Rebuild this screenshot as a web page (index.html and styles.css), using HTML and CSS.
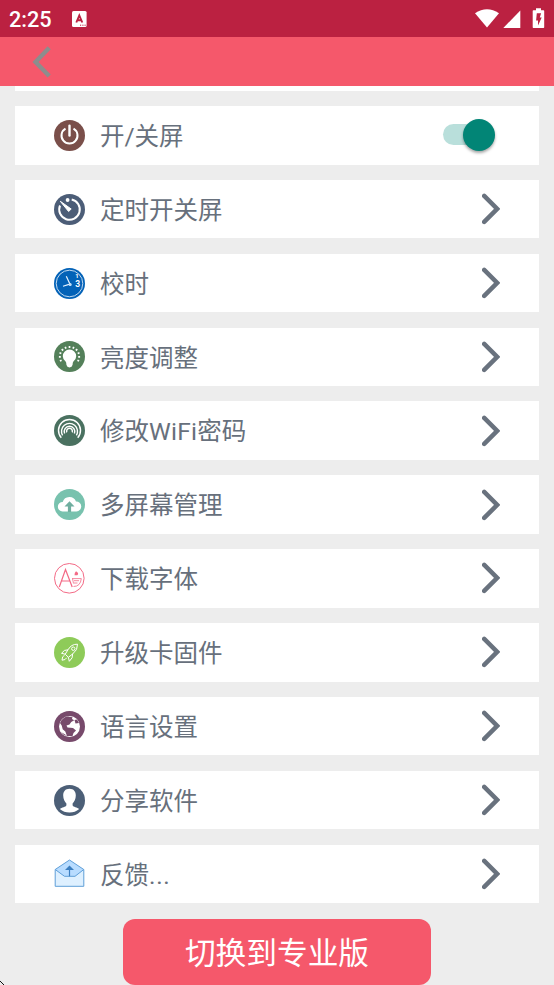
FILE: index.html
```html
<!DOCTYPE html>
<html lang="zh-CN">
<head>
<meta charset="utf-8">
<title>设置</title>
<link rel="stylesheet" href="styles.css">
</head>
<body>
<svg width="0" height="0" class="defs"><defs>
<symbol id="chevron" viewBox="0 0 18 32"><path d="M2.200 2.900L15.200 15.900L2.200 28.900" fill="none" stroke="#69727e" stroke-width="4.500" stroke-linecap="round" stroke-linejoin="miter"/></symbol>
</defs></svg>
<div class="screen">
<header class="status">
<span class="clock">2:25</span>
<svg class="note" viewBox="0 0 15 17"><rect x="0" y="0" width="14.600" height="16" rx="1.500" fill="#fff"/><path d="M4.300 11.500L7.300 4.500L10.300 11.500M5.500 9.200H9.100" fill="none" stroke="#bb2141" stroke-width="1.900"/><path d="M8 14.200h1.200M10.300 14.200h1.200M12.500 14.200h1.200" stroke="#bb2141" stroke-width="1"/></svg>
<svg class="signals" viewBox="0 0 70 22"><g fill="#fff"><path d="M0 5.300Q12 -2.700 24 5.300L12 19.500Z"/><path d="M45.300 2.500V20H28.300Z"/><path d="M61 .2h5v2h2.500q.7 0 .7.700V19.300q0 .7-.7.700H58.400q-.7 0-.7-.7V2.900q0-.7.700-.7H61Z"/></g><path d="M61.800 5.200h4.300l-1.300 4.200h1.900l-3.700 8.200v-5.200h-1.900Z" fill="#bb2141"/></svg>
</header>
<nav class="bar"><svg class="back" viewBox="0 0 20 32"><path d="M17.200 1.800L3.500 16L17.200 30" fill="none" stroke="#8d8d8d" stroke-width="4.400"/></svg></nav>
<main>
<div class="sliver"></div>
<div class="list">
<div class="row"><svg class="icon" viewBox="0 0 31 31"><circle cx="15.500" cy="15.500" r="15.500" fill="#7a4f4a"/><path d="M11.500 8.600A8 8 0 1 0 19.500 8.600" fill="none" stroke="#fff" stroke-width="2"/><path d="M15.500 5.800V15.500" stroke="#fff" stroke-width="2.400" stroke-linecap="round"/></svg><span class="label">开/关屏</span><span class="switch"><span class="knob"></span></span></div>
<div class="row"><svg class="icon" viewBox="0 0 31 31"><circle cx="15.500" cy="15.500" r="15.500" fill="#4c5d77"/><path d="M17.700 5.400A10.300 10.300 0 1 1 6 11.500" fill="none" stroke="#fff" stroke-width="2"/><circle cx="13.600" cy="6" r="1.900" fill="#fff"/><path d="M6.300 7.300L17.200 15L14.600 17.500Z" fill="#fff" stroke="#fff" stroke-width="1" stroke-linejoin="round"/></svg><span class="label">定时开关屏</span><svg class="go"><use href="#chevron"/></svg></div>
<div class="row"><svg class="icon" viewBox="0 0 31 31"><circle cx="15.500" cy="15.500" r="15.500" fill="#0362b7"/><circle cx="15.500" cy="15.500" r="13.300" fill="none" stroke="#d8e8f7" stroke-width=".9"/><path d="M12.300 8.200L16.600 17.500M9 18.200L16.600 15.900" stroke="#e9f4ff" stroke-width="1.200"/><circle cx="16.200" cy="16.500" r="1.500" fill="#c2def5"/><text x="21.200" y="10" class="digit-one">1</text><text x="21.200" y="19.200" class="digit-three">3</text></svg><span class="label">校时</span><svg class="go"><use href="#chevron"/></svg></div>
<div class="row"><svg class="icon" viewBox="0 0 31 31"><circle cx="15.500" cy="15.500" r="15.500" fill="#54805a"/><path d="M8.800 15.200a6.700 6.700 0 0 1 13.400 0q0 3-2.800 5.400-.8.900-.8 3.200-.5 2.600-3.100 2.600t-3.100-2.600q0-2.300-.8-3.200-2.800-2.400-2.800-5.400Z" fill="#fff"/><path d="M15.500 5V7M11.200 5.900L12 7.700M19.800 5.900L19 7.700M7.700 8.200L9.200 9.500M23.300 8.200L21.800 9.500M5.500 11.800L7.300 12.500M25.500 11.800L23.700 12.500M4.900 15.800H6.800M26.100 15.800H24.200M5.900 20L7.600 19.200M25.100 20L23.400 19.200" stroke="#fff" stroke-width="1.700"/></svg><span class="label">亮度调整</span><svg class="go"><use href="#chevron"/></svg></div>
<div class="row"><svg class="icon" viewBox="0 0 31 31"><circle cx="15.500" cy="15.500" r="15.500" fill="#4a7160"/><g fill="none" stroke="#fff" stroke-width="1.450"><path d="M7.300 22.800A11 11 0 1 1 23.700 22.800"/><path d="M8.600 20.400A8 8 0 1 1 22.400 20.400"/><path d="M10.600 18.500A5.300 5.300 0 1 1 20.400 18.500"/><path d="M12.900 17.500A2.900 2.900 0 1 1 18.100 17.500"/></g><path d="M15.500 15L21.500 21.500H9.500Z" fill="#4a7160"/></svg><span class="label">修改<span class="latin">WiFi</span>密码</span><svg class="go"><use href="#chevron"/></svg></div>
<div class="row"><svg class="icon" viewBox="0 0 31 31"><circle cx="15.500" cy="15.500" r="15.500" fill="#78c2ae"/><path d="M8.500 22.500A4.700 4.700 0 0 1 8.700 13A7 7 0 0 1 22 12.500A5 5 0 0 1 22.500 22.500Z" fill="#fff"/><path d="M15.500 12.300L20.500 17.500H17.100V23H13.900V17.500H10.500Z" fill="#6fae9f"/></svg><span class="label">多屏幕管理</span><svg class="go"><use href="#chevron"/></svg></div>
<div class="row"><svg class="icon" viewBox="0 0 31 31"><g fill="none" stroke="#f36a86"><circle cx="15.300" cy="15.300" r="14.800" stroke-width="1"/><path d="M5.300 24L11.500 6.500L18.200 24M7.500 18H15.800" stroke-width="1.200"/><path d="M18 15.600H27.300Q26.500 23.500 19.500 23.500M18.500 15.500L19.500 20.500M20 17.700H25M20 20H23.500" stroke-width=".8"/></g><path d="M20.500 12.300q-.5-2 1.500-4 3.500 2 1.300 4Z" fill="#f36a86"/></svg><span class="label">下载字体</span><svg class="go"><use href="#chevron"/></svg></div>
<div class="row"><svg class="icon" viewBox="0 0 31 31"><circle cx="15.500" cy="15.500" r="15.500" fill="#8ecb59"/><g fill="none" stroke="#fff" stroke-width="1" stroke-linejoin="round"><path d="M23.500 7.200Q17.200 7 14 12.800L11.200 17.200L14.400 20.300L18.600 17Q24 13 23.500 7.200Z"/><circle cx="19.300" cy="11.700" r="1.700"/><path d="M14 12.800Q10 12.400 7.500 16.300L11.200 17.200M18.600 17Q19.300 21 15.300 24.300L14.400 20.300M10.600 18.200Q8 19 8 23.200Q11.500 23.200 12.800 20.700"/></g></svg><span class="label">升级卡固件</span><svg class="go"><use href="#chevron"/></svg></div>
<div class="row"><svg class="icon" viewBox="0 0 31 31"><circle cx="15.500" cy="15.500" r="15.500" fill="#774a6b"/><circle cx="15.500" cy="15.500" r="10.500" fill="#fff"/><path d="M6 12Q8.500 6 14 5.500L18.500 6.200L18 8L20.200 9.200L17.200 11L15.500 13.500L12.500 14.500L13.500 16.500L19 17L22 19.500L19.500 22L18.500 25H13L11.300 20.500L8.700 18.200L7.700 14.500Z" fill="#774a6b"/><path d="M20.500 9L23 8.500L25 12L21.500 12.500ZM7 21L10 24L13.500 25" fill="#774a6b"/></svg><span class="label">语言设置</span><svg class="go"><use href="#chevron"/></svg></div>
<div class="row"><svg class="icon" viewBox="0 0 31 31"><circle cx="15.500" cy="15.500" r="15.500" fill="#4c5f77"/><path d="M15.500 3.800C19.800 3.800 21.800 6.700 21.800 10.500C21.800 14 20.200 17 18.600 18.500V20.300C19.300 22.200 23.200 22.300 25.200 24Q21 27.500 15.500 27.500T5.800 24C7.800 22.300 11.700 22.200 12.400 20.300V18.500C10.800 17 9.200 14 9.200 10.500C9.200 6.700 11.200 3.800 15.500 3.800Z" fill="#fff"/></svg><span class="label">分享软件</span><svg class="go"><use href="#chevron"/></svg></div>
<div class="row"><svg class="icon" viewBox="0 0 31 31"><path d="M1.200 11.500V28.300H29.800V11.500" fill="#def0ff" stroke="#5f9fd8" stroke-width="1"/><path d="M1.200 11.500L15.500 2L29.800 11.500L21 18.300H10.500Z" fill="#b8dcff" stroke="#5f9fd8" stroke-width="1"/><path d="M15.500 9V18.300" stroke="#3c7fc0" stroke-width="1.200"/><path d="M15.500 7.500L20 12H11Z" fill="#3c7fc0"/></svg><span class="label">反馈<span class="dots">...</span></span><svg class="go"><use href="#chevron"/></svg></div>
</div>
<button class="pro">切换到专业版</button>
</main>
<svg class="corner" viewBox="0 0 5 5" shape-rendering="crispEdges"><path d="M0 1h1v1h1v1h1v1h1v1H3V4H2V3H1V2H0Z" fill="#111"/></svg>
</div>
</body>
</html>
```
FILE: styles.css
```css
* { box-sizing: border-box; }
body { margin: 0; background: #ededed; font-family: Roboto, "Noto Sans CJK SC", sans-serif; }
.defs { display: none; }
.screen { position: relative; width: 554px; height: 985px; overflow: hidden; }
.status { display: flex; align-items: center; height: 37px; padding: 0 10px 0 9px; background: #bb2141; }
.clock { width: 63px; font-size: 21.700px; font-weight: 500; line-height: 37px; padding-top: 2px; color: #fff; }
.note { width: 15px; height: 17px; margin-top: 1px; }
.signals { width: 70px; height: 22px; margin-left: auto; margin-right: -1px; margin-top: 1px; }
.bar { display: flex; align-items: center; height: 49px; padding-left: 32px; background: #f5586b; }
.back { width: 20px; height: 32px; }
main { padding: 0 15.400px 0 15px; }
.sliver { height: 5px; margin-bottom: 15px; background: #fff; }
.list { display: grid; grid-auto-rows: 58.600px; gap: 15.270px; }
.row { display: flex; align-items: center; padding: 0 39px 0 39px; background: #fff; }
.icon { flex: none; width: 31px; height: 31px; }
.label { margin-left: 15px; padding-top: 3.500px; font-size: 24.500px; line-height: 36px; color: #67707c; white-space: nowrap; }
.latin { letter-spacing: .25px; }
.dots { letter-spacing: .7px; }
.go { width: 18px; height: 32px; margin-left: auto; }
.switch { position: relative; width: 47px; height: 21px; margin-left: auto; margin-top: -1px; margin-right: 10px; border-radius: 11px; background: #b9dfdb; }
.knob { position: absolute; left: 20px; top: -5px; width: 32px; height: 32px; border-radius: 50%; background: #028576; box-shadow: 0 2px 3px rgba(0,0,0,.35); }
.digit-one { font: bold 6px Roboto, sans-serif; fill: #fff; }
.digit-three { font: bold 8.500px Roboto, sans-serif; fill: #fff; }
.pro { display: block; width: 308px; height: 66px; margin: 15.500px 0 0 108px; padding: 4px 0 0; border: 0; border-radius: 12px; background: #f5586b; color: #fff; font: 30.700px/62px Roboto, "Noto Sans CJK SC", sans-serif; }
.corner { position: absolute; left: 0; bottom: 0; width: 5px; height: 5px; }
```
